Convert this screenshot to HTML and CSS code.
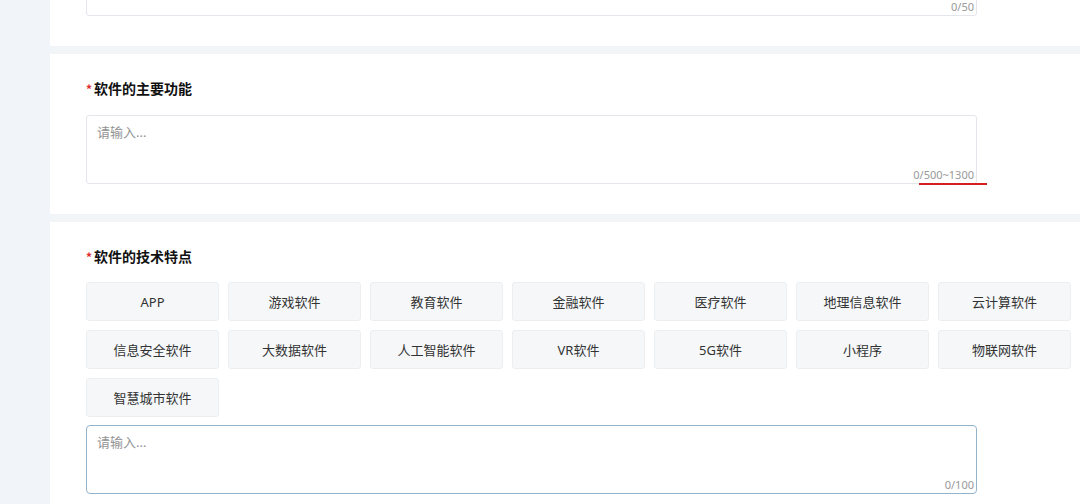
FILE: index.html
```html
<!DOCTYPE html>
<html lang="zh-CN">

<head>
    <meta charset="UTF-8">
    <meta name="viewport" content="width=device-width, initial-scale=1.0">
    <title>软件信息</title>
    <link rel="stylesheet" href="styles.css">
</head>

<body>
    <div class="page">
        <div class="sidebar"></div>

        <div class="main">
            <!-- 上一项（已滚出视口） -->
            <div class="card">
                <div class="field first">
                    <textarea class="input"></textarea>
                    <span class="counter">0/50</span>
                </div>
            </div>

            <div class="card">
                <div class="card-title"><span class="star">*</span>软件的主要功能</div>
                <div class="field">
                    <textarea class="input" placeholder="请输入..."></textarea>
                    <span class="counter">0/500~1300</span>
                    <!-- 标注线 -->
                    <span class="mark"></span>
                </div>
            </div>

            <div class="card">
                <div class="card-title"><span class="star">*</span>软件的技术特点</div>
                <div class="tags">
                    <div class="tag">APP</div>
                    <div class="tag">游戏软件</div>
                    <div class="tag">教育软件</div>
                    <div class="tag">金融软件</div>
                    <div class="tag">医疗软件</div>
                    <div class="tag">地理信息软件</div>
                    <div class="tag">云计算软件</div>
                    <div class="tag">信息安全软件</div>
                    <div class="tag">大数据软件</div>
                    <div class="tag">人工智能软件</div>
                    <div class="tag">VR软件</div>
                    <div class="tag">5G软件</div>
                    <div class="tag">小程序</div>
                    <div class="tag">物联网软件</div>
                    <div class="tag">智慧城市软件</div>
                </div>
                <div class="field">
                    <textarea class="input focus" placeholder="请输入..."></textarea>
                    <span class="counter">0/100</span>
                </div>
            </div>
        </div>
    </div>
</body>

</html>
```

FILE: styles.css
```css
html,
body {
    margin: 0;
    height: 100%;
    overflow: hidden;
}

body {
    background-color: #f2f5f8;
    font-family: "Noto Sans", "Noto Sans CJK SC", sans-serif;
    color: #333;
}

.page {
    display: flex;
    height: 100%;
}

.sidebar {
    width: 50px;
    flex-shrink: 0;
    background-color: #f1f4f8;
}

.main {
    flex: 1;
    display: flex;
    flex-direction: column;
    gap: 8px;
    margin-top: -77px;
    /* 页面已向下滚动 */
}

.card {
    background-color: #fff;
    padding: 24px 36px 30px 36px;
}

.card-title {
    height: 20px;
    line-height: 20px;
    font-size: 14px;
    font-weight: bold;
    color: #111;
    font-family: "Noto Sans CJK SC", sans-serif;
    display: flex;
    align-items: center;
}

.star {
    color: #e02a2a;
    font-size: 12px;
    margin-right: 2px;
    margin-top: 2px;
}

.field {
    position: relative;
    width: 891px;
    margin-top: 17px;
}

.field.first {
    margin-top: 0;
}

.input {
    display: block;
    box-sizing: border-box;
    width: 100%;
    height: 69px;
    padding: 6px 10px;
    border: 1px solid #e3e6ea;
    border-radius: 3px;
    resize: none;
    outline: none;
    font-family: "Noto Sans", "Noto Sans CJK SC", sans-serif;
    font-size: 13px;
    line-height: 20px;
    color: #333;
}

.input::placeholder {
    color: #939393;
}

.input.focus {
    border-color: #93b3cb;
    border-radius: 4px;
}

.counter {
    position: absolute;
    right: 3px;
    bottom: 1px;
    font-size: 11px;
    line-height: 16px;
    color: #999;
}

.mark {
    position: absolute;
    left: 833px;
    bottom: -1px;
    width: 68px;
    height: 2px;
    background-color: #d42020;
}

.tags {
    display: grid;
    grid-template-columns: repeat(7, 133px);
    column-gap: 9px;
    row-gap: 9px;
    margin-top: 16px;
}

.tags + .field {
    margin-top: 8px;
}

.tag {
    box-sizing: border-box;
    height: 39px;
    display: flex;
    align-items: center;
    justify-content: center;
    background-color: #f5f7f9;
    border: 1px solid #eceff2;
    border-radius: 3px;
    font-size: 13px;
    color: #333;
}
```
